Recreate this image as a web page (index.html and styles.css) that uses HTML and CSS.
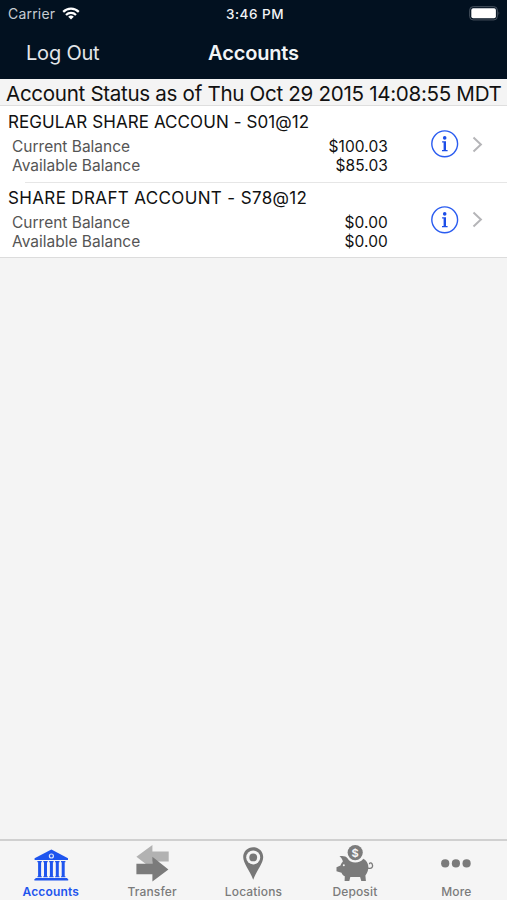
FILE: index.html
```html
<!DOCTYPE html>
<html lang="en">
<head>
  <meta charset="UTF-8">
  <meta name="viewport" content="width=device-width, initial-scale=1.0">
  <title>Accounts</title>
  <link rel="stylesheet" href="styles.css">
</head>
<body>
  <header class="top">
    <div class="status-bar">
      <div class="carrier">
        <span>Carrier</span>
        <svg width="18" height="13" viewBox="0 0 18 13" fill="none" stroke="#fff" stroke-width="2.2">
          <path d="M1.2 4.9a11 11 0 0 1 15.6 0"/>
          <path d="M4 8a7.1 7.1 0 0 1 10 0"/>
          <path d="M9 12.6L6.2 9.8a4 4 0 0 1 5.6 0z" fill="#fff" stroke="none"/>
        </svg>
      </div>
      <span class="time">3:46 PM</span>
      <svg class="battery" width="32" height="15" viewBox="0 0 32 15">
        <rect x="0.7" y="0.7" width="27.6" height="13.2" rx="3.4" fill="none" stroke="#4a5562" stroke-width="1"/>
        <rect x="2.3" y="2.3" width="24.6" height="10" rx="1.8" fill="#fff"/>
        <path d="M29.6 5.2q1.7 2.1 0 4.2z" fill="#5a6470"/>
      </svg>
    </div>
    <nav class="nav-bar">
      <a class="logout">Log Out</a>
      <h1>Accounts</h1>
    </nav>
  </header>

  <div class="banner"><span>Account Status as of Thu Oct 29 2015 14:08:55 MDT</span></div>

  <!-- Account list -->
  <main class="accounts">
    <section class="account">
      <div class="details">
        <h2>REGULAR SHARE ACCOUN - S01@12</h2>
        <div class="balance"><span>Current Balance</span><b>$100.03</b></div>
        <div class="balance"><span>Available Balance</span><b>$85.03</b></div>
      </div>
      <svg class="info" width="28" height="28" viewBox="0 0 28 28">
        <circle cx="13.7" cy="13.8" r="12.9" fill="none" stroke="#2a5cf0" stroke-width="1.4"/>
        <circle cx="13.7" cy="7.9" r="1.8" fill="#1c4ee8"/>
        <path d="M11.1 11.2H15v8.9h1.6v1.2H11v-1.2h1.6v-7.7h-1.5z" fill="#1c4ee8"/>
      </svg>
      <svg class="chevron" width="11" height="17" viewBox="0 0 11 17">
        <path d="M1.5 1.5l7.4 7-7.4 7" fill="none" stroke="#b5b5b8" stroke-width="2"/>
      </svg>
    </section>
    <section class="account">
      <div class="details">
        <h2 class="wide">SHARE DRAFT ACCOUNT - S78@12</h2>
        <div class="balance"><span>Current Balance</span><b>$0.00</b></div>
        <div class="balance"><span>Available Balance</span><b>$0.00</b></div>
      </div>
      <svg class="info" width="28" height="28" viewBox="0 0 28 28">
        <circle cx="13.7" cy="13.8" r="12.9" fill="none" stroke="#2a5cf0" stroke-width="1.4"/>
        <circle cx="13.7" cy="7.9" r="1.8" fill="#1c4ee8"/>
        <path d="M11.1 11.2H15v8.9h1.6v1.2H11v-1.2h1.6v-7.7h-1.5z" fill="#1c4ee8"/>
      </svg>
      <svg class="chevron" width="11" height="17" viewBox="0 0 11 17">
        <path d="M1.5 1.5l7.4 7-7.4 7" fill="none" stroke="#b5b5b8" stroke-width="2"/>
      </svg>
    </section>
  </main>

  <!-- Bottom tabs -->
  <footer class="tab-bar">
    <a class="tab active">
      <svg width="36" height="40" viewBox="0 0 36 40" fill="#1f55ee">
        <path d="M18.4 7.6L35 16.2v1.9H1.6v-1.9z"/>
        <circle cx="18.4" cy="14" r="2" fill="none" stroke="#dfe6f8" stroke-width="1.2"/>
        <path d="M4.4 19h4.4v1.2h-.7v14h.7v1H4.4v-1h.7v-14h-.7zM10.3 19h4.4v1.2h-.7v14h.7v1h-4.4v-1h.7v-14h-.7zM16.2 19h4.4v1.2h-.7v14h.7v1h-4.4v-1h.7v-14h-.7zM22.1 19h4.4v1.2h-.7v14h.7v1h-4.4v-1h.7v-14h-.7zM28 19h4.4v1.2h-.7v14h.7v1H28v-1h.7v-14H28z"/>
        <path d="M2.4 36h32v1.1h.8v1.3H1.4v-1.3h1z"/>
      </svg>
      <span>Accounts</span>
    </a>
    <a class="tab">
      <svg width="36" height="40" viewBox="0 0 36 40">
        <path d="M2.4 14.8L18.4 3v6.5h16.3v10H18.4V27z" fill="#b2b2b2"/>
        <path d="M2.4 21.7h16v-7l16 12.7-16 12.1v-7.3h-16z" fill="#7b7b7b"/>
      </svg>
      <span>Transfer</span>
    </a>
    <a class="tab">
      <svg width="36" height="40" viewBox="0 0 36 40">
        <path d="M18.2 5.2c5.7 0 10 4.4 10 9.8 0 6.3-6 12.5-10 22.7-4-10.2-10-16.4-10-22.7 0-5.4 4.3-9.8 10-9.8z" fill="#777"/>
        <circle cx="18.2" cy="15.4" r="7" fill="#f5f5f5"/>
        <circle cx="18.2" cy="15.4" r="3.9" fill="#777"/>
      </svg>
      <span>Locations</span>
    </a>
    <a class="tab">
      <svg width="40" height="40" viewBox="0 0 40 40" fill="#7b7b7b">
        <path d="M4.5 14.4c3.5-.8 6.5.1 8 1.8 1.6 2.9 4.4 4.3 7.8 4.3s6.2-1.2 8-3.7c2.8 1.5 4.6 4.1 5 7.3.3 3.6-.7 6.6-2.9 9.4l.5 5.5h-4.6l-1.2-4H15.3l-1 4H9.6l.2-4.8c-1.5-.6-2.5-1.8-3.3-3.5L1.5 29.2v-4l4-1.6c.4-1.7 1.2-2.8 2.3-3.8-.1-2.2-1.1-4-3.3-5.4z"/>
        <path d="M32.5 25.8c4.5 1.8 6-1.2 4.6-3.9-1-1.6-2.6-1.2-2.7.3" fill="none" stroke="#7b7b7b" stroke-width="1.3"/>
        <circle cx="8.8" cy="23.3" r="1" fill="#f5f5f5"/>
        <circle cx="20.2" cy="10.6" r="7.6"/>
        <text x="20.2" y="14.6" class="coin" text-anchor="middle">$</text>
      </svg>
      <span>Deposit</span>
    </a>
    <a class="tab">
      <svg width="36" height="40" viewBox="0 0 36 40" fill="#7b7b7b">
        <circle cx="7.2" cy="21.4" r="4.1"/>
        <circle cx="17.9" cy="21.4" r="4.1"/>
        <circle cx="28.6" cy="21.4" r="4.1"/>
      </svg>
      <span>More</span>
    </a>
  </footer>
</body>
</html>
```
FILE: styles.css
```css
* {
  box-sizing: border-box;
}
body {
  margin: 0;
  height: 900px;
  display: flex;
  flex-direction: column;
  background: #f4f4f4;
  font-family: Inter, 'Liberation Sans', sans-serif;
  color: #111;
}
h1, h2 {
  margin: 0;
}
svg {
  display: block;
  flex-shrink: 0;
}

/* header */
.top {
  height: 79px;
  background: #021120;
  color: #f2f4f6;
}
.status-bar {
  display: grid;
  grid-template-columns: 1fr auto 1fr;
  align-items: center;
  height: 27px;
  padding: 0 6px 0 8px;
}
.carrier {
  display: flex;
  align-items: center;
  gap: 7px;
  font-size: 14px;
  letter-spacing: 0.2px;
  color: #c6ccd2;
}
.time {
  padding-left: 1px;
  font-size: 13.5px;
  font-weight: 500;
  letter-spacing: 0.5px;
}
.battery {
  justify-self: end;
}
.nav-bar {
  display: grid;
  grid-template-columns: 1fr auto 1fr;
  align-items: center;
  height: 51px;
  padding: 0 26px;
}
.logout {
  font-size: 20px;
  letter-spacing: -0.2px;
  color: #e2e6ea;
}
.nav-bar h1 {
  font-size: 20px;
  font-weight: 600;
  letter-spacing: -0.15px;
}

.banner {
  height: 27px;
  line-height: 29px;
  padding-left: 6px;
  border-bottom: 1px solid #dedede;
  font-size: 20.6px;
  letter-spacing: -0.32px;
  white-space: nowrap;
}

/* account rows */
.accounts {
  background: #fff;
  border-bottom: 1px solid #dcdcdc;
}
.account {
  display: flex;
  align-items: center;
  height: 76px;
  padding: 0 24px 0 8px;
}
.account + .account {
  height: 75px;
  background: linear-gradient(#e6e6e6, #e6e6e6) 25px 0 / 100% 1px no-repeat;
}
.details {
  align-self: flex-start;
  width: 380px;
  margin-right: 43px;
  padding-top: 4px;
}
.details h2 {
  font-size: 17px;
  font-weight: 400;
  line-height: 24px;
  letter-spacing: 0.08px;
  margin-bottom: 4px;
  white-space: nowrap;
}
.details .wide {
  letter-spacing: 0.36px;
}
.balance {
  display: flex;
  justify-content: space-between;
  padding-left: 4px;
  font-size: 15.5px;
  line-height: 18.5px;
  color: #555;
}
.balance b {
  font-weight: 400;
  letter-spacing: 0.1px;
  color: #111;
}
.chevron {
  margin-left: 13px;
}

/* tabs */
.tab-bar {
  display: grid;
  grid-template-columns: repeat(5, 1fr);
  height: 61px;
  margin-top: auto;
  padding-top: 1px;
  border-top: 2px solid #d0d0d0;
  background: #f5f5f5;
}
.tab {
  display: flex;
  flex-direction: column;
  align-items: center;
  font-size: 12px;
  font-weight: 500;
  line-height: 20px;
  letter-spacing: 0.15px;
  color: #7b7b7b;
}
.tab.active {
  color: #1f55ee;
  font-weight: 600;
}
.coin {
  fill: #f5f5f5;
  font-size: 11px;
  font-weight: 700;
}
```
